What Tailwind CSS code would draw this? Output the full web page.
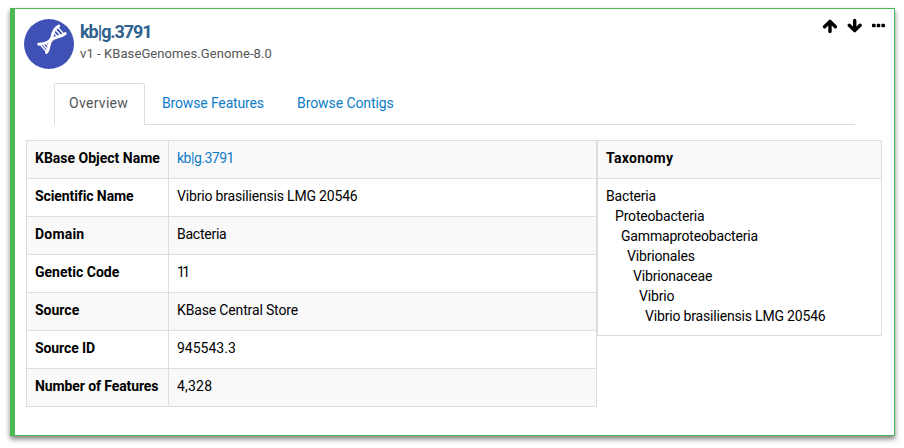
<!DOCTYPE html>
<html lang="en">
<head>
<meta charset="utf-8">
<title>kb|g.3791</title>
<script src="https://cdn.jsdelivr.net/npm/@tailwindcss/browser@4"></script>
</head>
<body class="h-[448px] overflow-hidden bg-white pt-2 pl-2.5 font-[Roboto,sans-serif] text-[14px] leading-5 text-black">
<main class="h-[428px] w-[885px] border border-l-[5px] border-[#4bb856] bg-white shadow-[0_3px_5px_rgba(0,0,0,0.5)]">
  <header class="flex h-[74px] items-start pt-[10px] pl-[9px] pr-[9px]">
    <svg class="h-[50px] w-[50px] shrink-0" viewBox="0 0 50 50" fill="none">
      <circle cx="25" cy="25" r="25" fill="#3f51b5"/>
      <g stroke="#fff" stroke-linecap="round">
        <path d="M14.7 25.2C22 24.8 26.8 23 28 18C29 12.5 30.5 9 34.8 7" stroke-width="2.9"/>
        <path d="M22.5 33.4C26 30 24 24.5 27.5 21C31 17 36.5 18.8 41.2 14.6" stroke-width="2.9"/>
        <path d="M31.5 10.5L37.2 17M29.7 13.5L34.2 18.3M34 8.5L40 15.3M17 26.5L22.3 32.5M19.5 26L23.8 30.7M22.3 25L24.3 27.5" stroke-width="1.3"/>
      </g>
    </svg>
    <div class="ml-[6px] flex-1 pt-[2px]">
      <h1 class="text-[18px] font-bold leading-[22px] tracking-[-1.05px] text-[#2e618d]">kb|g.3791</h1>
      <p class="pt-px text-[13px] leading-[20px] tracking-[0.08px] text-[#555]">v1 - KBaseGenomes.Genome-8.0</p>
    </div>
    <div class="-mt-px flex items-center gap-[10px]">
      <svg class="h-[16px] w-[15px]" viewBox="0 0 15 16" fill="none" stroke="#000" stroke-width="3.4" stroke-linecap="round" stroke-linejoin="round"><path d="M8 13.6V4M2.6 8.8L8 3.4L13.4 8.8"/></svg>
      <svg class="h-[16px] w-[15px]" viewBox="0 0 15 16" fill="none" stroke="#000" stroke-width="3.4" stroke-linecap="round" stroke-linejoin="round"><path d="M7.7 2.4V12M2.3 7.2L7.7 12.6L13.1 7.2"/></svg>
      <svg class="h-[16px] w-[13px]" viewBox="0 0 13 16"><rect y="5.7" width="3.6" height="3.6" rx="1"/><rect x="4.7" y="5.7" width="3.6" height="3.6" rx="1"/><rect x="9.4" y="5.7" width="3.6" height="3.6" rx="1"/></svg>
    </div>
  </header>
  <nav class="mr-[39px] ml-[39px] flex h-[42px] border-b border-[#ddd] tracking-[-0.15px] text-[#0c7cc9]">
    <a class="h-[42px] w-[91px] rounded-t-[2px] border border-b-0 border-[#ddd] bg-white pt-[9px] pl-[14px] tracking-[0.3px] text-[#555]">Overview</a>
    <a class="ml-[17px] w-[135px] pt-[10px]">Browse Features</a>
    <a class="pt-[10px] tracking-[-0.08px]">Browse Contigs</a>
  </nav>
  <div class="flex items-start pt-[15px] pl-[11px]">
    <table class="w-[571px] table-fixed border-collapse [&_td]:border [&_td]:border-[#ddd] [&_td]:px-2 [&_td]:pt-0 [&_td]:pb-[3px] [&_th]:border [&_th]:border-[#ddd] [&_th]:px-2 [&_th]:pt-0 [&_th]:pb-[3px] [&_th]:text-left [&_th]:font-bold [&_th]:whitespace-nowrap [&_tr]:h-[38px] [&_tr:nth-child(odd)]:bg-[#f9f9f9]">
      <colgroup><col class="w-[142px]"><col></colgroup>
      <tbody>
        <tr><th>KBase Object Name</th><td class="tracking-[-0.5px] text-[#0c7cc9]">kb|g.3791</td></tr>
        <tr><th class="tracking-[-0.1px]">Scientific Name</th><td class="tracking-[-0.18px]">Vibrio brasiliensis LMG 20546</td></tr>
        <tr><th class="tracking-[0.2px]">Domain</th><td class="tracking-[-0.25px]">Bacteria</td></tr>
        <tr><th>Genetic Code</th><td class="tracking-[-2.5px]">11</td></tr>
        <tr><th>Source</th><td class="tracking-[-0.15px]">KBase Central Store</td></tr>
        <tr><th class="tracking-[-0.1px]">Source ID</th><td>945543.3</td></tr>
        <tr><th class="tracking-[-0.1px]">Number of Features</th><td class="tracking-[0.2px]">4,328</td></tr>
      </tbody>
    </table>
    <section class="h-[196px] w-[285px] border border-[#ddd]">
      <h2 class="h-[38px] border-b border-[#ddd] bg-[#f9f9f9] px-2 pt-[7px] font-bold tracking-[0.3px]">Taxonomy</h2>
      <ul class="px-2 pt-[7px] tracking-[-0.18px]">
        <li>Bacteria</li>
        <li class="pl-[9px]">Proteobacteria</li>
        <li class="pl-[15px]">Gammaproteobacteria</li>
        <li class="pl-[21px]">Vibrionales</li>
        <li class="pl-[27px]">Vibrionaceae</li>
        <li class="pl-[33px]">Vibrio</li>
        <li class="pl-[39px]">Vibrio brasiliensis LMG 20546</li>
      </ul>
    </section>
  </div>
</main>
</body>
</html>
